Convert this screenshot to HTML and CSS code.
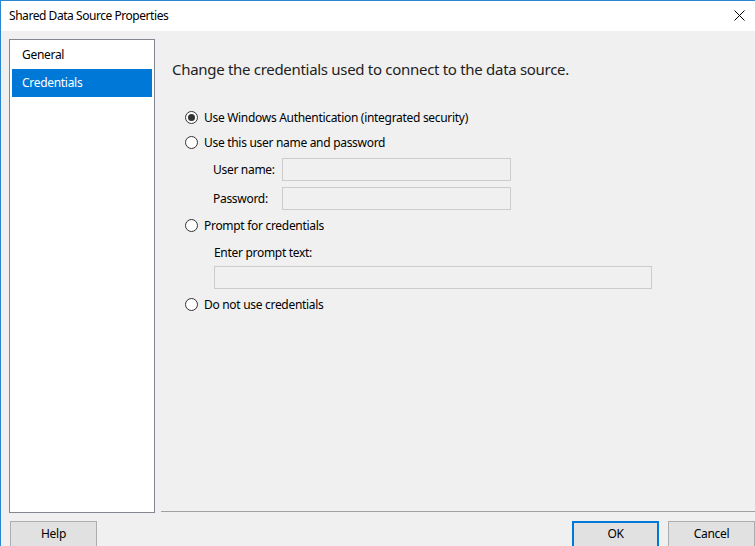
FILE: index.html
```html
<!DOCTYPE html>
<html lang="en">
<head>
<meta charset="utf-8">
<title>Shared Data Source Properties</title>
<link rel="stylesheet" href="styles.css">
</head>
<body>
<div class="window">
  <div class="titlebar">
    <span class="title">Shared Data Source Properties</span>
    <svg class="close" width="11" height="11" viewBox="0 0 11 11"><path d="M0.5 0.5 L10.5 10.5 M10.5 0.5 L0.5 10.5" stroke="#000" stroke-width="1" fill="none"/></svg>
  </div>
  <div class="main">
    <div class="nav">
      <div class="nav-item">General</div>
      <div class="nav-item selected">Credentials</div>
    </div>
    <div class="page">
      <div class="heading">Change the credentials used to connect to the data source.</div>
      <div class="options">
        <label class="radio-row first"><span class="radio checked"></span><span>Use Windows Authentication (integrated security)</span></label>
        <label class="radio-row"><span class="radio"></span><span>Use this user name and password</span></label>
        <div class="field-row user"><span class="field-label">User name:</span><span class="textbox short"></span></div>
        <div class="field-row pw"><span class="field-label">Password:</span><span class="textbox short"></span></div>
        <label class="radio-row third"><span class="radio"></span><span>Prompt for credentials</span></label>
        <div class="prompt-label">Enter prompt text:</div>
        <span class="textbox wide"></span>
        <label class="radio-row fourth"><span class="radio"></span><span>Do not use credentials</span></label>
      </div>
    </div>
  </div>
  <div class="footer">
    <button class="btn">Help</button>
    <div class="spacer"></div>
    <button class="btn default">OK</button>
    <button class="btn">Cancel</button>
  </div>
</div>
</body>
</html>
```
FILE: styles.css
```css
html, body {
  margin: 0;
  padding: 0;
  background: #f0f0f0;
}
body {
  font-family: "Noto Sans", "Open Sans", sans-serif;
  font-size: 12px;
  letter-spacing: -0.3px;
  color: #000;
}
.window {
  width: 755px;
  height: 546px;
  box-sizing: border-box;
  border-top: 1px solid #2b85d3;
  border-left: 1px solid #2b85d3;
  background: #f0f0f0;
  overflow: hidden;
  display: flex;
  flex-direction: column;
}
.titlebar {
  height: 30px;
  flex: none;
  background: #fff;
  display: flex;
  align-items: center;
  justify-content: space-between;
  padding: 0 10px 0 8px;
}
.title {
  font-size: 12px;
  letter-spacing: -0.45px;
  line-height: 16px;
  margin-top: -1px;
}
.close {
  margin-top: -1px;
}
.main {
  display: flex;
  flex: none;
  height: 482px;
  padding: 8px 0 0 8px;
  box-sizing: border-box;
}
.nav {
  width: 146px;
  height: 474px;
  box-sizing: border-box;
  border: 1px solid #828790;
  background: #fff;
  padding: 1px;
  flex: none;
}
.nav-item {
  height: 28px;
  line-height: 28px;
  padding-left: 10px;
  margin: 0 1px;
}
.nav-item.selected {
  background: #0078d7;
  color: #fff;
}
.page {
  margin-left: 6px;
  flex: 1;
  height: 481px;
  box-sizing: border-box;
  border-bottom: 1px solid #a0a0a0;
  margin-top: -8px;
  padding: 28px 0 0 11px;
}
.heading {
  font-size: 15px;
  line-height: 20px;
  color: #1e1e1e;
}
.options {
  margin-left: 13px;
  display: flex;
  flex-direction: column;
  align-items: flex-start;
}
.radio-row {
  display: flex;
  align-items: center;
  height: 25px;
  gap: 6px;
}
.radio-row.first {
  margin-top: 26px;
}
.radio-row.third {
  margin-top: 3px;
}
.radio-row.fourth {
  margin-top: 3px;
}
.radio {
  width: 13px;
  height: 13px;
  box-sizing: border-box;
  border: 1px solid #333;
  border-radius: 50%;
  background: #fff;
  display: flex;
  align-items: center;
  justify-content: center;
}
.radio.checked::after {
  content: "";
  width: 7px;
  height: 7px;
  border-radius: 50%;
  background: #333;
}
.field-row {
  display: flex;
  align-items: center;
  margin-left: 28px;
  height: 23px;
}
.field-row.user {
  margin-top: 3px;
}
.field-row.pw {
  margin-top: 6px;
}
.field-label {
  width: 69px;
}
.textbox {
  display: block;
  height: 23px;
  box-sizing: border-box;
  border: 1px solid #cccccc;
  background: #f0f0f0;
}
.textbox.short {
  width: 229px;
}
.prompt-label {
  margin-left: 29px;
  margin-top: 7px;
  line-height: 16px;
}
.textbox.wide {
  margin-left: 29px;
  margin-top: 5px;
  width: 438px;
}
.footer {
  display: flex;
  padding: 8px 0 0 9px;
  flex: none;
}
.spacer {
  flex: 1;
}
.btn {
  font-family: inherit;
  font-size: 12px;
  letter-spacing: -0.3px;
  width: 87px;
  height: 28px;
  box-sizing: border-box;
  border: 1px solid #adadad;
  background: #e1e1e1;
  color: #000;
  padding: 0 0 3px 0;
  margin: 0;
}
.btn.default {
  border: 2px solid #0078d7;
  margin-right: 9px;
}
```
